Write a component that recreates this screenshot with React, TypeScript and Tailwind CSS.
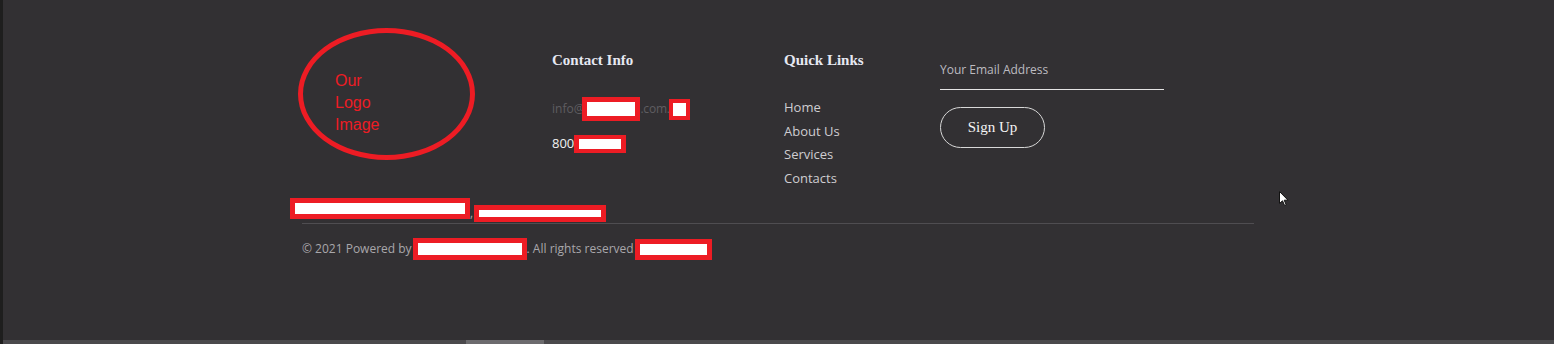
const serif = 'font-["Liberation_Serif","DejaVu_Serif",serif]';
const sans = 'font-["Open_Sans","Liberation_Sans",sans-serif]';

function Redacted({ className }: { className: string }) {
    return <span className={`inline-block shrink-0 border-[#ed1c24] bg-white ${className}`} />;
}

export default function App() {
    const links = ['Home', 'About Us', 'Services', 'Contacts'];
    return (
        <div className={`relative flex h-[344px] w-full overflow-hidden bg-[#323033] ${sans}`}>
            <div className="w-[3px] shrink-0 bg-[#1e1e1e]" />
            <div className="flex flex-1 flex-col">
                <div className="flex-1 pt-[28px]">
                    <div className="flex h-[170px] pl-[295px]">
                        {/* logo */}
                        <div className="h-[132px] w-[177px] rounded-[50%] border-[5px] border-[#ed1c24] pl-[32px] pt-[37px] font-['Liberation_Sans',sans-serif] text-[16px] leading-[22px] text-[#ed1c24]">
                            <p>Our</p>
                            <p>Logo</p>
                            <p>Image</p>
                        </div>

                        {/* contact */}
                        <div className="ml-[77px] w-[232px]">
                            <h3 className={`mt-[22px] text-[15px] font-bold leading-[20px] text-[#e6e8f2] ${serif}`}>
                                Contact Info
                            </h3>
                            <div className="mt-[27px] flex h-[24px] items-center text-[12px] text-[#5f5d61]">
                                <span>info@</span>
                                <Redacted className="-ml-[2px] h-[24px] w-[58px] border-[5px]" />
                                <span className="tracking-[-0.2px]">.com.</span>
                                <Redacted className="-ml-[1px] h-[21px] w-[21px] border-[4px]" />
                            </div>
                            <div className="mt-[14px] flex h-[18px] items-center text-[13px] text-[#f2f2f2]">
                                <span>800</span>
                                <Redacted className="h-[18px] w-[52px] border-[4px] border-x-[5px]" />
                            </div>
                        </div>

                        {/* quick links */}
                        <div className="w-[156px]">
                            <h3 className={`mt-[22px] text-[15px] font-bold leading-[20px] text-[#e6e8f2] ${serif}`}>
                                Quick Links
                            </h3>
                            <ul className="mt-[26px] text-[13px] leading-[23.5px] text-[#cfcdd1]">
                                {links.map((l) => (
                                    <li key={l}>{l}</li>
                                ))}
                            </ul>
                        </div>

                        {/* newsletter */}
                        <div className="w-[224px]">
                            <div className="mt-[34px] border-b border-[#e4e4e4] pb-[11px] text-[12px] leading-[16px] text-[#bdbbc0]">
                                Your Email Address
                            </div>
                            <button
                                className={`mt-[17px] h-[41px] w-[105px] rounded-full border border-[#d8d8d8] text-[15px] text-[#f4f4f4] ${serif}`}
                            >
                                Sign Up
                            </button>
                        </div>
                    </div>

                    <div className="flex h-[25px] items-start pl-[287px] text-[12px] text-[#aaa]">
                        <Redacted className="h-[21px] w-[180px] border-[5px]" />
                        <span className="mt-[6px] w-[4px]">,</span>
                        <Redacted className="mt-[7px] h-[17px] w-[132px] border-[5px]" />
                    </div>

                    <div className="ml-[299px] h-px w-[952px] bg-[#4f4d51]" />

                    <div className="mt-[14px] flex h-[22px] items-center pl-[299px] text-[12px] text-[#a9a7ab]">
                        <span>© 2021 Powered by</span>
                        <Redacted className="ml-[1px] h-[22px] w-[114px] border-[5px]" />
                        <span>. All rights reserved</span>
                        <Redacted className="ml-[1px] h-[21px] w-[77px] border-[5px]" />
                    </div>
                </div>
                <div className="relative h-[4px] bg-[#4a494c]">
                    <div className="absolute left-[463px] top-0 h-[4px] w-[78px] bg-[#6c6b6e]" />
                </div>
            </div>

            {/* mouse cursor */}
            <svg className="absolute left-[1279px] top-[191px]" width="10" height="16" viewBox="0 0 10 16">
                <path d="M0.5 0.5 L0.5 12.5 L3.5 9.8 L5.6 14.5 L7.2 13.8 L5.2 9.2 L9 9.2 Z" fill="#fff" stroke="#111" strokeWidth="1" />
            </svg>
        </div>
    );
}
